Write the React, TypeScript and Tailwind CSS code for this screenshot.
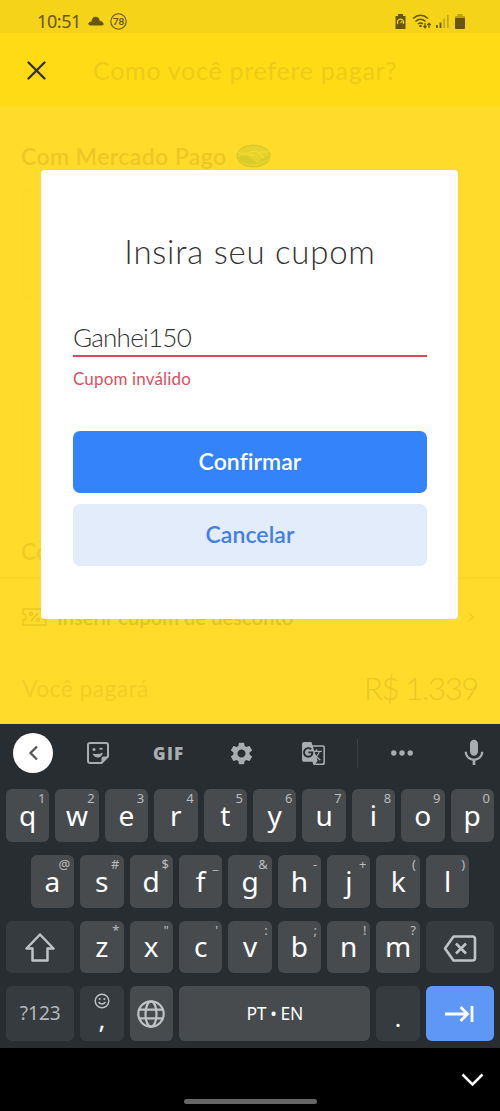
import type { ReactNode } from "react";
import { MdGTranslate, MdMic, MdSettings } from "react-icons/md";

type KeyDef = {
  label: string;
  hint: string;
};

const toKeys = (letters: string, hints: string): KeyDef[] =>
  letters.split("").map((label, i) => ({ label, hint: hints[i] }));

const rowOne = toKeys("qwertyuiop", "1234567890");
const rowTwo = toKeys("asdfghjkl", "@#$_&-+()");
const rowThree = toKeys("zxcvbnm", "*\"':;!?");

function LetterKey({ label, hint }: KeyDef) {
  return (
    <div className="relative flex h-full w-[43.4px] shrink-0 items-center justify-center rounded-[6px] bg-[#474b4e] pb-[2px]">
      <span className="text-[28px] leading-none text-white">{label}</span>
      <span className="absolute right-[4px] top-[2px] text-[13px] leading-[15px] text-[#b9bcbe]">
        {hint}
      </span>
    </div>
  );
}

function FunctionKey({ className, children }: { className: string; children: ReactNode }) {
  return (
    <div
      className={`flex h-full shrink-0 items-center justify-center rounded-[6px] ${className}`}
    >
      {children}
    </div>
  );
}

function StatusBar() {
  return (
    <div className="flex h-[33px] items-center bg-[#f5d318] pl-[37px] pr-[35px] pt-[9px] text-[#665610]">
      <span className="font-['Noto_Sans'] text-[18px] leading-none tracking-[-0.4px]">10:51</span>
      <svg className="ml-[7px]" width="16" height="10" viewBox="0 0 16 10" fill="currentColor">
        <path d="M2 9.500Q0 9 .3 7.300 1 5.500 3.500 5.500 4 1 7.500 .8 11 .8 11.600 4.500 14.500 4.800 15.700 7.800 16 9.500 14 9.500Z" />
      </svg>
      <span className="relative ml-[6px] flex size-[17px] items-center justify-center text-[10px] font-bold">
        <svg className="absolute inset-0" width="17" height="17" viewBox="0 0 17 17" fill="none">
          <circle cx="8.500" cy="8.500" r="7.700" stroke="currentColor" strokeWidth="1.100" />
        </svg>
        78
      </span>
      <div className="ml-auto flex items-center">
        <svg width="11" height="15" viewBox="0 0 11 15">
          <path d="M3 0h5v2h2.500v13H.5V2H3Z" fill="currentColor" />
          <path d="M3 9.800A3 3 0 1 1 8 9.800M5.500 9l1.600-2" fill="none" stroke="#f5d318" strokeWidth="1.200" />
        </svg>
        <svg className="ml-[6px]" width="20" height="15" viewBox="0 0 20 15" fill="none">
          <path
            d="M1 4.500Q8.500-2 16 4.500M3.500 7.500Q8.500 3 13.500 7.500M6 10Q8.500 8 11 10"
            stroke="currentColor"
            strokeWidth="1.600"
          />
          <circle cx="8.500" cy="12" r="1.300" fill="currentColor" />
          <path
            d="M13 9v4.500M11.500 12l1.500 1.700 1.500-1.700M17 14V9.300M15.300 11l1.700-1.700L18.700 11"
            stroke="currentColor"
            strokeWidth="1.300"
          />
        </svg>
        <svg className="ml-[4px]" width="13" height="13" viewBox="0 0 13 13" fill="currentColor">
          <path d="M0 10h1.800v3H0ZM3.600 7.500h1.800V13H3.600Z" />
          <path d="M7.300 3.500H9V13H7.300ZM11 0h1.700v13H11Z" opacity=".35" />
        </svg>
        <svg className="ml-[6px]" width="10" height="15" viewBox="0 0 10 15" fill="currentColor">
          <path d="M2.500 0h5v2H10v2.500H0V2h2.500Z" opacity=".4" />
          <rect y="4" width="10" height="11" rx="1" />
        </svg>
      </div>
    </div>
  );
}

function CheckoutBackdrop() {
  return (
    <>
      <header className="flex h-[74px] items-center bg-[#ffdb15] pl-[27px]">
        <svg width="19" height="19" viewBox="0 0 19 19" fill="none">
          <path d="M1.500 1.500l16 16M17.500 1.500l-16 16" stroke="#35300f" strokeWidth="2.300" strokeLinecap="round" />
        </svg>
        <h1 className="ml-[47px] whitespace-nowrap text-[25px] leading-none tracking-[0.73px] text-[#eecb18]">
          Como você prefere pagar?
        </h1>
      </header>
      <section className="h-[617px] bg-[#ffdc2c] pt-[33px] text-[#efcc24]">
        <div className="flex h-[32px] items-center pl-[21px] text-[23px] font-semibold leading-none text-[#ebc825]">
          <span className="w-[204px] whitespace-nowrap tracking-[0.4px]">Com Mercado Pago</span>
          <svg className="ml-[11px]" width="35" height="24" viewBox="0 0 35 24" fill="none">
            <ellipse cx="17.500" cy="12" rx="16.500" ry="10.800" fill="#e6d22d" stroke="#d9cb2c" strokeWidth="1.300" />
            <path d="M2 13Q10 10 15 14L21 19Q15 21 8 18.500Q3 16 2 13ZM33 12Q27 12 23 17 32 18 33 12Z" fill="#d9cb2c" />
            <path d="M2 8Q9 11 14 8.500 20 5.500 24 9.500L28 14M12 10Q17 13 19 10M24 7.500Q29 9 33 7.500" stroke="#f3d92f" strokeWidth="1.500" />
          </svg>
        </div>
        <div className="mx-[22px] mt-[18px] h-[108px] rounded border border-[#fdda2a]" />
        <div className="mx-[22px] mt-[104px] h-[105px] rounded border border-[#fdd92a]" />
        <div className="flex h-[72px] items-center border-b-2 border-[#fad626] pl-[21px] pt-[18px] text-[23px] font-semibold">
          Com outros meios
        </div>
        <div className="flex h-[75px] items-center px-[22px]">
          <svg width="25" height="18" viewBox="0 0 25 18" fill="none" stroke="#e8c622" strokeWidth="1.300">
            <path d="M1 1h23v5a3 3 0 0 0 0 6v5H1v-5a3 3 0 0 0 0-6ZM9 13l7-8" />
            <circle cx="9" cy="6" r="1.500" />
            <circle cx="16" cy="12" r="1.500" />
          </svg>
          <span className="ml-[10px] whitespace-nowrap text-[20px] font-semibold tracking-[0.1px] text-[#e5c322]">
            Inserir cupom de desconto
          </span>
          <svg className="ml-auto mr-[3px]" width="7" height="10" viewBox="0 0 7 10" fill="none">
            <path d="M1 1l4 4-4 4" stroke="#efcc24" strokeWidth="1.300" />
          </svg>
        </div>
        <div className="flex h-[69px] items-center justify-between px-[22px] leading-none">
          <span className="text-[23px] tracking-[0.35px] text-[#f1ce25]">Você pagará</span>
          <span className="text-[31px] font-light tracking-[-1.3px] text-[#e9c725]">R$ 1.339</span>
        </div>
      </section>
    </>
  );
}

function CouponDialog() {
  return (
    <div className="absolute left-[41px] top-[170px] flex h-[449px] w-[417px] flex-col rounded-[4px] bg-white pl-[32px] pr-[31px] text-[#333]">
      <h2 className="mt-[61px] whitespace-nowrap text-center text-[33px] font-light leading-[40px] tracking-[0.75px]">
        Insira seu cupom
      </h2>
      <div className="mt-[47px] flex h-[39px] items-center border-b-[2.500px] border-[#da4859] text-[26px] font-light leading-none tracking-[-0.75px]">
        Ganhei150
      </div>
      <p className="mt-[11px] text-[17px] leading-[22px] tracking-[0.15px] text-[#d9515d]">Cupom inválido</p>
      <button className="mt-[41px] h-[62px] shrink-0 rounded-[7px] bg-[#3483fa] pb-[2px] text-[23px] font-semibold tracking-[0.05px] text-white">
        Confirmar
      </button>
      <button className="mt-[11px] h-[62px] shrink-0 rounded-[7px] bg-[#e2ecfb] pb-[2px] text-[23px] font-semibold tracking-[0.1px] text-[#457fdf]">
        Cancelar
      </button>
    </div>
  );
}

function KeyboardToolbar() {
  return (
    <div className="flex h-[65px] items-center pb-[7px] pl-[13px] pr-[15px] text-[#a9adb0]">
      <div className="flex size-[40px] items-center justify-center rounded-full bg-white">
        <svg width="11" height="16" viewBox="0 0 11 16" fill="none">
          <path d="M9 1.500L2.500 8 9 14.500" stroke="#555" strokeWidth="2.300" />
        </svg>
      </div>
      <svg className="ml-[34px]" width="22" height="22" viewBox="0 0 22 22" fill="none">
        <path d="M3 1h16q2 0 2 2v11.500L14.500 21H3q-2 0-2-2V3q0-2 2-2Z" stroke="currentColor" strokeWidth="2" />
        <path d="M21 14.500h-4.500q-2 0-2 2V21Z" fill="currentColor" />
        <circle cx="7" cy="7.500" r="1.500" fill="currentColor" />
        <path d="M12.500 7.500q1.500-1.800 3 0" stroke="currentColor" strokeWidth="1.500" />
        <path d="M5.500 11.500Q11 13 16 10.500 14.500 15.500 11 15.500 7 15.500 5.500 11.500Z" fill="currentColor" />
      </svg>
      <span className="ml-[44px] w-[33px] font-['Open_Sans'] text-[17px] font-extrabold leading-none tracking-[1.3px]">
        GIF
      </span>
      <MdSettings className="ml-[42px]" size={27} />
      <MdGTranslate className="ml-[46px]" size={25} />
      <div className="ml-[31px] h-[29px] w-px bg-[#3d4348]" />
      <svg className="ml-[33px]" width="22" height="6" viewBox="0 0 22 6" fill="currentColor">
        <circle cx="2.800" cy="3" r="2.700" />
        <circle cx="11" cy="3" r="2.700" />
        <circle cx="19.200" cy="3" r="2.700" />
      </svg>
      <MdMic className="ml-auto -mr-[5px]" size={32} />
    </div>
  );
}

function Keyboard() {
  return (
    <div className="flex h-[324px] flex-col bg-[#282d31] font-['Noto_Sans']">
      <KeyboardToolbar />
      <div className="flex h-[53px] shrink-0 gap-[6px] px-[6px]">
        {rowOne.map((key) => (
          <LetterKey key={key.label} {...key} />
        ))}
      </div>
      <div className="mt-[13px] flex h-[53px] shrink-0 justify-center gap-[6px]">
        {rowTwo.map((key) => (
          <LetterKey key={key.label} {...key} />
        ))}
      </div>
      <div className="mt-[13px] flex h-[52px] shrink-0 justify-center gap-[6px]">
        <FunctionKey className="w-[68px] bg-[#363b3f]">
          <svg width="30" height="29" viewBox="0 0 30 29" fill="none">
            <path
              d="M15 1.500L28.500 15.500H22.500V27.500H7.500V15.500H1.500Z"
              stroke="#c0c3c5"
              strokeWidth="2.500"
              strokeLinejoin="round"
            />
          </svg>
        </FunctionKey>
        {rowThree.map((key) => (
          <LetterKey key={key.label} {...key} />
        ))}
        <FunctionKey className="w-[68px] bg-[#363b3f] pt-[2px]">
          <svg width="34" height="27" viewBox="0 0 34 27" fill="none" stroke="#c0c3c5" strokeWidth="2.600">
            <path d="M10.500 1.500H29.500Q32 1.500 32 4V23Q32 25.500 29.500 25.500H10.500L2 13.500Z" strokeLinejoin="round" />
            <path d="M13 8.500l10 10M23 8.500l-10 10" />
          </svg>
        </FunctionKey>
      </div>
      <div className="mt-[13px] flex h-[55px] shrink-0 justify-center gap-[6px] text-white">
        <FunctionKey className="w-[68px] bg-[#363b3f] text-[19px] text-[#b4b7b9]">?123</FunctionKey>
        <FunctionKey className="w-[43.4px] flex-col bg-[#363b3f] pb-[6px]">
          <svg width="16" height="16" viewBox="0 0 16 16" fill="none">
            <circle cx="8" cy="8" r="6.800" stroke="#c0c3c5" strokeWidth="1.400" />
            <path d="M4.500 9q3.500 4 7 0" stroke="#c0c3c5" strokeWidth="1.300" />
            <circle cx="5.700" cy="6" r="1" fill="#c0c3c5" />
            <circle cx="10.300" cy="6" r="1" fill="#c0c3c5" />
          </svg>
          <span className="text-[26px] leading-[20px]">,</span>
        </FunctionKey>
        <FunctionKey className="w-[43.4px] bg-[#474b4e]">
          <svg width="28" height="28" viewBox="0 0 28 28" fill="none" stroke="#c0c3c5" strokeWidth="2.200">
            <circle cx="14" cy="14" r="12.700" />
            <ellipse cx="14" cy="14" rx="5.500" ry="12.700" />
            <path d="M2.500 9.700h23M2.500 18.300h23" />
          </svg>
        </FunctionKey>
        <FunctionKey className="w-[191.400px] bg-[#474b4e] text-[17.500px] tracking-[-0.4px]">
          PT • EN
        </FunctionKey>
        <FunctionKey className="w-[43.4px] bg-[#363b3f] pt-[8px] text-[24px]">.</FunctionKey>
        <FunctionKey className="w-[68px] bg-[#5e97f6]">
          <svg width="29" height="18" viewBox="0 0 29 18" fill="none" stroke="#fff" strokeWidth="2.800">
            <path d="M0 9h22M15.500 2l7 7-7 7M27 1v16" />
          </svg>
        </FunctionKey>
      </div>
    </div>
  );
}

export default function App() {
  return (
    <main className="relative flex h-[1111px] w-[500px] flex-col overflow-hidden bg-black font-['Lato',sans-serif]">
      <StatusBar />
      <CheckoutBackdrop />
      <CouponDialog />
      <Keyboard />
      <nav className="flex flex-1 flex-col pt-[25px]">
        <svg className="ml-auto mr-[16px]" width="23" height="14" viewBox="0 0 23 14" fill="none">
          <path d="M1.500 1.500l10 10 10-10" stroke="#fff" strokeWidth="2.500" />
        </svg>
        <div className="mx-auto mt-[12px] h-[5px] w-[133px] rounded-full bg-[#666]" />
      </nav>
    </main>
  );
}
